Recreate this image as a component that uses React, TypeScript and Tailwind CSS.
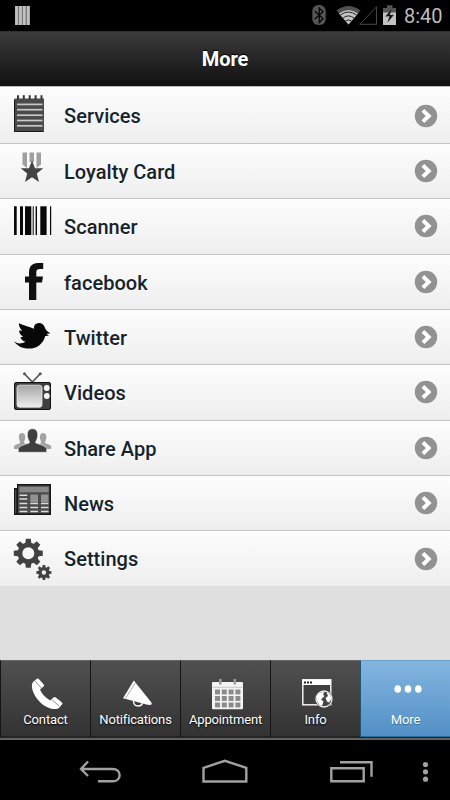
import type { ReactNode } from "react";

function Gear({ x, y, r, hole }: { x: number; y: number; r: number; hole: number }) {
  return (
    <g transform={`translate(${x} ${y})`} fill="#424242">
      {[0, 45, 90, 135, 180, 225, 270, 315].map((a) => (
        <path key={a} transform={`rotate(${a})`} d={`M${-r * 0.17} ${-r}H${r * 0.17}L${r * 0.22} ${-r * 0.6}H${-r * 0.22}Z`} />
      ))}
      <circle r={(r * 0.74 + hole) / 2} fill="none" stroke="#424242" strokeWidth={r * 0.74 - hole} />
    </g>
  );
}

const bars = [[14, 2.7], [20, 3], [25, 6.3], [32.7, 1], [35.6, 1.4], [40.3, 6.3], [50, 1.2]];

type Row = { label: string; top: number; h: string; height: number; icon: ReactNode };

/* Row icons share one vertical coordinate system; `top` is where each row begins. */
const rows: Row[] = [
  {
    label: "Services", top: 87, h: "h-[57px] pt-px", height: 56,
    icon: (
      <g transform="translate(0 -1)">
        <path d="M15 98.5H44V132H14V99.5Z" fill="#4a4a4a" />
        <path d="M14.5 100V131.5H43" fill="none" stroke="#171717" />
        {[18, 23.8, 29.7, 35.6, 41.5].map((x) => <path key={x} d={`M${x - 1} 95.2h2v4h-2z`} fill="#333" />)}
        {[104.4, 109.7, 115.2, 120.5, 125.8].map((y) => <path key={y} d={`M17 ${y}H42.5`} stroke="#c8c8c8" strokeWidth="1.7" />)}
      </g>
    ),
  },
  {
    label: "Loyalty Card", top: 144, h: "h-[55px]", height: 54,
    icon: (
      <g>
        <path d="M22.5 152.5H27V168L22.5 164.5ZM29.5 152.5H34V162H29.5ZM36.5 152.5H41V164.5L36.5 168Z" fill="#a0a0a0" />
        <path d="M32 160.5L35 168.3H43.3L36.8 173.5L39 182L32 177.2L25 182L27.2 173.5L20.7 168.3H29Z" fill="#444" />
      </g>
    ),
  },
  {
    label: "Scanner", top: 199, h: "h-[56px]", height: 55,
    icon: <g>{bars.map(([x, w]) => <rect key={x} x={x} y="206.3" width={w} height="28.7" fill="#080808" />)}</g>,
  },
  {
    label: "facebook", top: 255, h: "h-[55px]", height: 54,
    icon: <path d="M29 300V282.6H25V276.5H29V272.5C29 266.5 32 263 38 263H43.2V269H39.7C37.5 269 36.3 270 36.3 272.2V276.5H43L42 282.6H36.3V300Z" fill="#101010" />,
  },
  {
    label: "Twitter", top: 310, h: "h-[55px]", height: 54,
    icon: <path d="M13.7 341C17 344 21 344.2 25.5 341.8C22.5 341 21 339.3 20.5 337.2L23.2 336.8C20.2 335 19 332.5 19.2 330.3L22.3 331C20 328.5 18.6 325.5 18.9 323.3C22.5 325.2 27.5 326.3 34 328.7C33.6 325 36 323 38.8 322.9C41.8 322.8 44 324.5 44.8 327.5C45.8 330 47.2 331.5 50.4 333.2L46.5 334L49 335.8L45.2 335.9C43.3 343.5 37 348.7 28.7 348.6C22 348.5 17.5 346 13.7 341Z" fill="#080808" />,
  },
  {
    label: "Videos", top: 365, h: "h-[56px]", height: 55,
    icon: (
      <g>
        <path d="M24.7 374L32.3 382L40 374" fill="none" stroke="#555" strokeWidth="1.7" />
        <circle cx="24.5" cy="373.8" r="1.5" fill="#555" /><circle cx="40.2" cy="373.8" r="1.5" fill="#555" />
        <rect x="14.5" y="382.5" width="36" height="27" rx="1.5" fill="#3f3f3f" stroke="#111" />
        <rect x="17" y="385.2" width="25" height="22" rx="2.5" fill="url(#screen)" stroke="#ededed" strokeWidth=".8" />
        <circle cx="46.8" cy="388" r="2.9" fill="#f4f4f4" /><circle cx="46.8" cy="396" r="2.9" fill="#f4f4f4" />
      </g>
    ),
  },
  {
    label: "Share App", top: 421, h: "h-[55px]", height: 54,
    icon: (
      <g>
        <path d="M14 449V446.5C14 444.8 18 444.3 20 443C20.5 441.5 18.8 440 18.8 437C18.8 434.3 20 433 22 433S25.3 434.3 25.3 437C25.3 440 23.8 441.5 24.2 443L28 445V449Z" fill="#a3a3a3" />
        <path d="M51.2 449V446.5C51.2 444.8 47.2 444.3 45.2 443C44.7 441.5 46.4 440 46.4 437C46.4 434.3 45.2 433 43.2 433S39.9 434.3 39.9 437C39.9 440 41.4 441.5 41 443L37.2 445V449Z" fill="#a3a3a3" />
        <path d="M18.3 452.3V449.5C18.3 446.5 22 445.5 29.3 443C30.2 441.5 27.4 440 27.4 434.5C27.4 430.8 29.4 428.7 32.5 428.7S37.7 430.8 37.7 434.5C37.7 440 35 441.5 35.8 443C43 445.5 46.7 446.5 46.7 449.5V452.3Z" fill="#3f3f3f" stroke="#f4f4f4" strokeWidth=".6" />
      </g>
    ),
  },
  {
    label: "News", top: 476, h: "h-[55px]", height: 54,
    icon: (
      <g>
        <path d="M14 488H17V484H51V515H14Z" fill="#171717" />
        <path d="M15 489.5H16.3V513.5H15ZM18 485.5H49.5V513.5H18Z" fill="#4b4b4b" />
        <path d="M19.5 486.7H48.7V492.3H19.5Z" fill="#888" />
        <path d="M30.3 494.5H38V502.3H30.3ZM41 494.5H48.5V502.3H41Z" fill="#929292" />
        {[495.3, 499].map((y) => <path key={y} d={`M19.5 ${y}H27.3`} stroke="#ddd" strokeWidth="1.5" />)}
        {[503.5, 507.5, 511.5].map((y) => <path key={y} d={`M19.5 ${y}H27.3M30.3 ${y}H38M41 ${y}H48.5`} stroke="#ddd" strokeWidth="1.5" />)}
      </g>
    ),
  },
  {
    label: "Settings", top: 531, h: "h-[55px]", height: 55,
    icon: <g><Gear x={28.3} y={553.3} r={14.5} hole={6} /><Gear x={43.9} y={572.5} r={7.5} hole={2.2} /></g>,
  },
];

function StatusIcons() {
  return (
    <svg width="80" height="31" viewBox="310 0 80 31" fill="none">
      <rect x="312.3" y="5" width="13.4" height="20" rx="6" fill="#555" />
      <path d="M314.8 11.2L323 18.5L319.3 22.5V8L323 11.8L314.8 19" stroke="#070707" strokeWidth="1.3" />
      <path d="M336.5 10.5Q348.5 1.5 360.5 10.5L348.5 24.5Z" fill="#505050" />
      <path d="M339 13.5Q348.5 6.5 358 13.5L348.5 24.5Z" fill="#c5c5c5" />
      <path d="M340.5 15Q348.5 9 356.5 15M343 18Q348.5 13.8 354 18M345.5 21Q348.5 18.8 351.5 21" stroke="#222" strokeWidth="1" />
      <path d="M359.8 24.3H376.5V6.8Z" stroke="#454545" />
    </svg>
  );
}

function Battery() {
  return (
    <svg width="14" height="31" viewBox="383 0 14 31">
      <path d="M383 8H387V5.2H392.5V8H396V25H383Z" fill="#555" />
      <path d="M383 12.5H396V25H383Z" fill="#c2c2c2" />
      <path d="M391.7 9L385.3 16.4L389.5 16.2L387.4 22.8L394 14.8L389.8 15Z" fill="#171717" />
    </svg>
  );
}

function Chevron() {
  return (
    <svg width="24" height="24" viewBox="0 0 24 24" fill="none">
      <circle cx="12" cy="12" r="11.2" fill="#929292" />
      <path d="M8.9 6.4L14.7 12L8.9 17.6" stroke="white" strokeWidth="4" />
    </svg>
  );
}

type Tab = { label: string; x: number; icon: ReactNode; active?: boolean };

const tabs: Tab[] = [
  {
    label: "Contact", x: 0,
    icon: (
      <g>
        <path d="M33 682L37.2 678.5C37.8 678.3 38.5 678.8 39 679.3L43.8 684.5C44.3 685.2 44 686 43.5 686.5L40 689.5C41.8 694 45.5 698 50.3 700.5L53.5 697.5C54.2 696.8 55 696.8 55.8 697.5L62 702.5C62.6 703.1 62.6 704 62 704.6L59 708C57.5 709.2 54 709.4 50.5 708.5C42 706 35 698 32.5 690C31.5 686.5 31.8 683.5 33 682Z" fill="white" />
        <path d="M35 681L41.3 688M52 699.8L59.2 706" stroke="#777" strokeWidth=".8" />
      </g>
    ),
  },
  {
    label: "Notifications", x: 90,
    icon: (
      <g>
        <path d="M133.8 680.5L151.8 703L151 705L147.5 704.8L123 698.3Z" fill="white" />
        <path d="M135.5 682.5L125.3 698.5" stroke="#888" strokeWidth=".7" />
        <path d="M133.5 701C133.5 704.2 135.3 706 138 706C140.3 706 142 705 142.5 703" fill="none" stroke="white" strokeWidth="1.4" />
      </g>
    ),
  },
  {
    label: "Appointment", x: 180,
    icon: (
      <g>
        <rect x="212" y="682" width="31" height="27.3" rx="1" fill="#f4f4f4" />
        <path d="M212.5 687.3H242.5" stroke="#bbb" strokeWidth=".8" />
        <path d="M220.3 679V684.5M234.8 679V684.5" stroke="#9a9a9a" strokeWidth="2.6" />
        {[689.5, 696, 702.5].map((y) => [215, 221.8, 228.6, 235.4].map((x) => <rect key={`${x}-${y}`} x={x} y={y} width="5" height="4.9" fill="#8b8b8b" />))}
      </g>
    ),
  },
  {
    label: "Info", x: 270,
    icon: (
      <g>
        <rect x="302.8" y="679.8" width="28" height="25" fill="#404040" stroke="#eee" strokeWidth="1.5" />
        <path d="M302.5 679.5H331V685H302.5Z" fill="white" />
        <path d="M304 681.5h2v2h-2zm3 0h2v2h-2zm3 0h2v2h-2z" fill="#222" />
        <circle cx="324" cy="699" r="9" fill="#333" /><circle cx="324" cy="699" r="8" fill="#444" stroke="#eee" strokeWidth="1.3" />
        <path d="M317 696C318 693 321 692 324.5 692L323 694.5L324.5 696L321 699.5L323.5 701.5L322 706C318 704.5 316 700.5 317 696ZM326.5 692.5C329 693 331.3 696 331.5 699L329 702.5L327 701.5L325.5 698L328 696Z" fill="white" />
      </g>
    ),
  },
  {
    label: "More", x: 360, active: true,
    icon: <g fill="white"><ellipse cx="397.7" cy="689" rx="3.3" ry="3.8" /><ellipse cx="408" cy="689" rx="3.3" ry="3.8" /><ellipse cx="418.3" cy="689" rx="3.3" ry="3.8" /></g>,
  },
];

export default function App() {
  return (
    <div className="flex h-[800px] w-[450px] flex-col overflow-hidden bg-[#dfdfdf] font-[Roboto,sans-serif]">
      <div className="flex h-[31px] shrink-0 items-center bg-black pl-[15px] pr-[8px]">
        <svg width="16" height="31" viewBox="15 0 16 31">
          <path d="M15 6H30V25H15Z" fill="#777" />
          <path d="M16.5 6V25M20.5 6V25M24.3 6V25M28.3 6V25" stroke="#c1c1c1" strokeWidth="2.7" />
        </svg>
        <div className="ml-auto flex items-center">
          <div className="w-[73px] overflow-hidden"><StatusIcons /></div>
          <Battery />
          <span className="ml-[7px] mt-[2px] w-[38px] whitespace-nowrap text-[20px] leading-[29px] text-[#bdbdbd]">8:40</span>
        </div>
      </div>
      <header className="flex h-[55px] shrink-0 items-center justify-center border-t border-[#303030] bg-linear-to-b from-[#3c3c3c] to-[#111] pb-px text-[20px] font-bold text-white [text-shadow:0_-1px_1px_#000]">
        More
      </header>
      <div className="h-px shrink-0 bg-[#bbb]" />
      <ul>
        {rows.map((row, i) => (
          <li key={row.label} className={`flex ${row.h} items-start bg-linear-to-b from-[#fdfdfd] to-[#eee] ${i < 8 ? "border-b border-[#c4c4c4]" : ""}`}>
            <svg width="64" height={row.height} viewBox={`0 ${row.top} 64 ${row.height}`} className="shrink-0">
              <defs><linearGradient id="screen" x2="0" y2="1"><stop stopColor="#a5a5a5" /><stop offset="1" stopColor="#eee" /></linearGradient></defs>
              {row.icon}
            </svg>
            <span className="mt-[16px] text-[20px] font-medium leading-[24px] tracking-[0.04px] text-[#15232d] [text-shadow:0_1px_0_#fff]">{row.label}</span>
            <div className={`ml-auto mr-[12px] ${i === 0 || i === 8 ? "mt-[16px]" : "mt-[15px]"}`}><Chevron /></div>
          </li>
        ))}
      </ul>
      <div className="grow" />
      <nav className="flex h-[80px] shrink-0 border-b-2 border-[#626262] bg-[#232323]">
        {tabs.map((tab) => (
          <div
            key={tab.label}
            className={`mb-px flex h-[77px] w-[90px] flex-col items-center border-b border-l border-t ${tab.active ? "border-b-[#246a96] border-l-[#17577d] border-t-[#6f9fc4] bg-linear-to-b from-[#84b5e0] to-[#5190c5]" : "border-b-[#252525] border-l-[#151515] border-t-[#656565] bg-linear-to-b from-[#505050] to-[#333]"}`}
          >
            <svg width="90" height="51" viewBox={`${tab.x} 661 90 51`} className="-ml-px shrink-0">{tab.icon}</svg>
            <span className={`text-[13px] leading-[16px] tracking-[-0.15px] text-white ${tab.active ? "[text-shadow:0_1px_1px_#35678f]" : "[text-shadow:0_1px_2px_#000]"}`}>{tab.label}</span>
          </div>
        ))}
      </nav>
      <div className="h-[60px] shrink-0 bg-black">
        <svg width="450" height="60" viewBox="0 740 450 60" fill="none" stroke="#a1a1a1" strokeWidth="2.4">
          <path d="M88 761.5L81 769L88 776M81 769H112.5C122 769 122 781.3 112.5 781.3H98" />
          <path d="M203.5 767.8L224.8 760.8L246.3 767.8V781.5H203.5Z" />
          <path d="M331.3 768.3H363.7V781.3H331.3ZM340 762.3H371.5V776.7" />
          <g fill="#a1a1a1" stroke="none"><circle cx="425.5" cy="764.5" r="2.6" /><circle cx="425.5" cy="771.8" r="2.6" /><circle cx="425.5" cy="779.2" r="2.6" /></g>
        </svg>
      </div>
    </div>
  );
}
